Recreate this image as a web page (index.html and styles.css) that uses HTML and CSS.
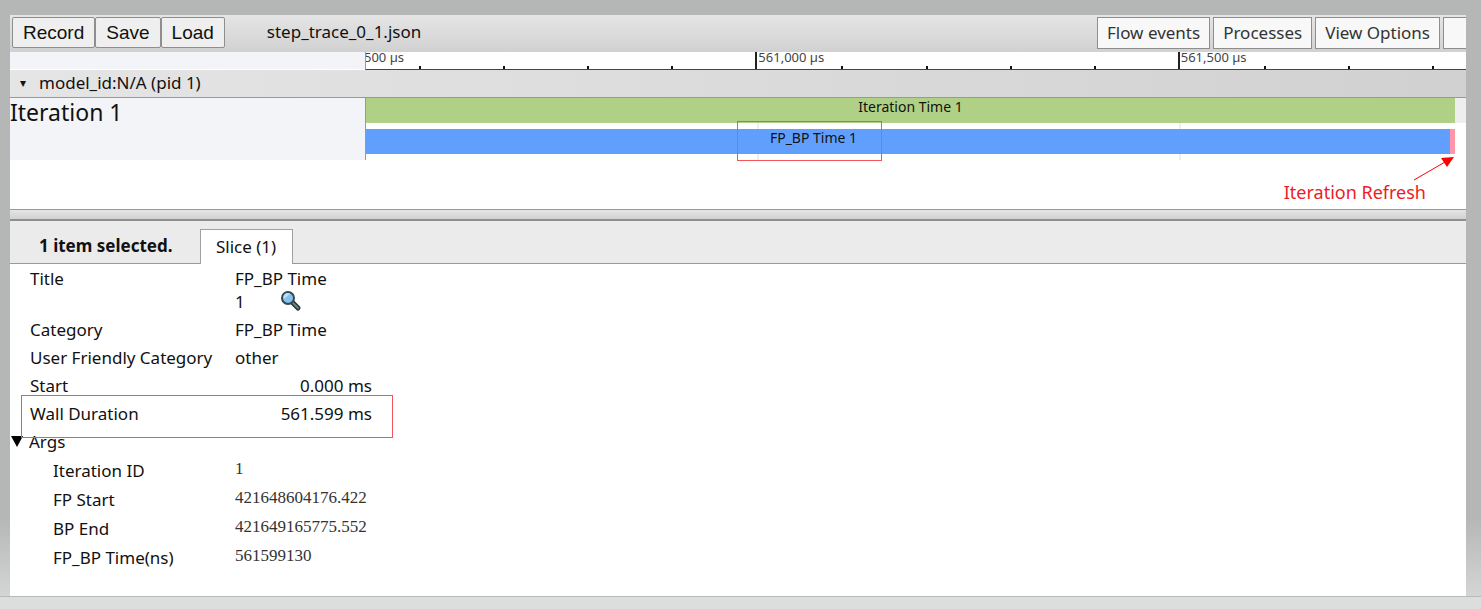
FILE: index.html
```html
<!DOCTYPE html>
<html lang="en">
<head>
<meta charset="utf-8">
<title>step_trace_0_1.json</title>
<link rel="stylesheet" href="styles.css">
</head>
<body>
<main class="viewer">
  <header class="toolbar">
    <div class="actions">
      <button class="action">Record</button>
      <button class="action">Save</button>
      <button class="action">Load</button>
    </div>
    <span class="filename">step_trace_0_1.json</span>
    <div class="menus">
      <button class="menu">Flow events</button>
      <button class="menu">Processes</button>
      <button class="menu">View Options</button>
      <button class="menu menu-cut" aria-label="More"></button>
    </div>
  </header>

  <section class="timeline">
    <div class="ruler">
      <div class="gutter"></div>
      <div class="axis">
        <div class="cell first"><span class="time cut">500 µs</span></div>
        <div class="cell minor"></div><div class="cell minor"></div><div class="cell minor"></div><div class="cell minor"></div>
        <div class="cell major"><span class="time">561,000 µs</span></div>
        <div class="cell minor"></div><div class="cell minor"></div><div class="cell minor"></div><div class="cell minor"></div>
        <div class="cell major"><span class="time">561,500 µs</span></div>
        <div class="cell minor"></div><div class="cell minor"></div><div class="cell minor last"></div>
      </div>
    </div>
    <button class="process"><span class="caret">▾</span>model_id:N/A (pid 1)</button>
    <div class="thread">
      <div class="thread-name">Iteration 1</div>
      <div class="lanes">
        <div class="lane lane-top"><div class="slice green">Iteration Time 1</div></div>
        <div class="lane">
          <div class="slice blue"></div><div class="slice pink"></div>
          <div class="callout">FP_BP Time 1</div>
        </div>
      </div>
    </div>
    <div class="note">
      <svg class="arrow" width="42" height="24" viewBox="0 0 42 24"><path d="M1 23L32 5" stroke="#f00" fill="none"/><path d="M41 0L28 1L34 10Z" fill="#f00"/></svg>
      <span>Iteration Refresh</span>
    </div>
  </section>

  <div class="splitter"></div>

  <section class="analysis">
    <div class="tabs">
      <strong class="summary">1 item selected.</strong>
      <button class="tab">Slice (1)</button>
    </div>
    <table class="props">
      <tbody>
        <tr><th>Title</th><td>FP_BP Time<br>1<a class="find" href="#" aria-label="Find slice"><svg width="22" height="22" viewBox="0 0 22 22"><path d="M12 12L18 18" stroke="#263238" stroke-width="5" stroke-linecap="round"/><path d="M13 13L18 18" stroke="#708087" stroke-width="2" stroke-linecap="round"/><circle cx="8" cy="8" r="6" fill="#83c1ef" stroke="#37474f" stroke-width="2"/><path d="M4 9A4 4 0 0 1 10 4L4 9Z" fill="#b9e0fa"/></svg></a></td></tr>
        <tr><th>Category</th><td>FP_BP Time</td></tr>
        <tr><th>User Friendly Category</th><td>other</td></tr>
        <tr><th>Start</th><td class="num">0.000 ms</td></tr>
        <tr class="marked"><th>Wall Duration</th><td class="num">561.599 ms</td></tr>
      </tbody>
      <tbody class="args">
        <tr><th class="args-head"><button class="toggle"><svg width="12" height="12" viewBox="0 0 12 12"><path d="M0 0H12L6 11Z"/></svg>Args</button></th><td></td></tr>
        <tr><th>Iteration ID</th><td>1</td></tr>
        <tr><th>FP Start</th><td>421648604176.422</td></tr>
        <tr><th>BP End</th><td>421649165775.552</td></tr>
        <tr><th>FP_BP Time(ns)</th><td>561599130</td></tr>
      </tbody>
    </table>
  </section>
</main>
</body>
</html>
```
FILE: styles.css
```css
* { box-sizing: border-box; }

body {
  margin: 0;
  min-height: 100vh;
  display: flex;
  flex-direction: column;
  padding: 15px 15px 0 10px;
  background: linear-gradient(#b4b7b6 0, #b4b7b6 85%, #d4d6d5 98%, #dcdedd 100%);
  font: 17px/23px "Noto Sans", "Open Sans", sans-serif;
  color: #111;
}

body::after {
  content: "";
  height: 12px;
  margin: 0 -15px 0 -10px;
  border-top: 1px solid #b8baba;
  background: #dcdedd;
}

button { font: inherit; color: inherit; margin: 0; }

.viewer {
  flex: 1;
  display: flex;
  flex-direction: column;
  background: #fff;
}

.toolbar {
  display: flex;
  align-items: flex-start;
  height: 37px;
  padding: 2px 0 0 2px;
  overflow: hidden;
  background: linear-gradient(#e5e5e5, #d1d1d1);
}

.actions { display: flex; }

.action {
  height: 31px;
  padding: 0 10px;
  border: 1px solid #8e8e8e;
  border-radius: 2px;
  background: #efefef;
  font: 19px/29px "Liberation Sans", Arial, sans-serif;
}

.filename { padding-left: 42px; line-height: 30px; }

.menus { display: flex; gap: 3px; margin-left: auto; }

.menu {
  height: 32px;
  padding: 0 9px;
  border: 1px solid #8e8e8e;
  background: #f8f8f8;
  color: #333;
  line-height: 28px;
}

.menu-cut { width: 23px; border-right: 0; }

.timeline { position: relative; height: 157px; }

.ruler { display: flex; height: 18px; }

.gutter { width: 355px; background: #f3f4f7; border-bottom: 1px solid #fff; }

.axis {
  flex: 1;
  display: flex;
  overflow: hidden;
  border-left: 1px solid #999;
  border-bottom: 1px solid #444;
}

.cell { flex: 84 1 0; min-width: 0; white-space: nowrap; }
.cell.first { flex-grow: 53; }
.cell.last { flex-grow: 34; }
.cell.major { border-left: 2px solid #222; }
.cell.minor::before {
  content: "";
  display: block;
  width: 2px;
  height: 3px;
  margin-top: 14px;
  background: #111;
}

.time { display: block; margin-left: 1px; font-size: 13px; line-height: 10px; color: #444; }
.time.cut { margin-left: -2px; }

.process {
  display: flex;
  align-items: center;
  width: 100%;
  height: 28px;
  padding: 0 0 2px 10px;
  border: 0;
  border-bottom: 1px solid #999;
  background: linear-gradient(90deg, #e5e5e5, #d1d1d1);
}

.caret { width: 19px; font: 12px/20px "DejaVu Sans", sans-serif; text-align: left; }

.thread { display: flex; height: 62px; }

.thread-name {
  width: 356px;
  border-right: 1px solid #999;
  background: #f3f4f7;
  font-size: 23px;
  line-height: 29px;
}

.lanes {
  flex: 1;
  display: flex;
  flex-direction: column;
  gap: 6px;
  background:
    linear-gradient(#eee, #eee) 35.6% 0 / 2px 100% no-repeat,
    linear-gradient(#eee, #eee) 74% 0 / 2px 100% no-repeat;
}

.lane { position: relative; display: flex; height: 25px; padding-right: 11px; }
.lane-top { background: #eee; }

.slice { height: 25px; font-size: 14px; line-height: 18px; text-align: center; }
.green { flex: 1; background: #b0d185; }
.blue { flex: 1; background: #619fff; }
.pink { width: 5px; background: #ff96a8; }

.callout {
  position: absolute;
  left: 371px;
  top: -8px;
  width: 145px;
  height: 40px;
  padding: 7px 0 0 8px;
  border: 1px solid #f2555a;
  font-size: 14px;
  line-height: 18px;
  text-align: center;
}

.note {
  position: absolute;
  right: 11px;
  top: 105px;
  display: flex;
  flex-direction: column;
  align-items: flex-end;
  color: #ed1c24;
  font-size: 18px;
}

.note span { margin-right: 29px; }

.splitter {
  height: 12px;
  border-top: 1px solid #999;
  border-bottom: 2px solid #8e8e8e;
  background: linear-gradient(#e5e5e5, #d1d1d1);
}

.tabs {
  display: flex;
  align-items: flex-end;
  height: 43px;
  border-bottom: 1px solid #999;
  background: #ebebeb;
}

.summary { width: 190px; padding-left: 29px; line-height: 34px; }

.tab {
  height: 35px;
  margin-bottom: -1px;
  padding: 0 16px 0 15px;
  border: 1px solid #a0a0a0;
  border-bottom: 0;
  background: #fff;
  line-height: 32px;
}

.props { border-collapse: collapse; margin-top: 1px; }
.props th, .props td {
  height: 28px;
  padding: 2px 0 3px;
  font-weight: 400;
  text-align: left;
  vertical-align: top;
}
.props th { width: 225px; padding-left: 20px; }
.props td { width: 137px; }
.props .num { text-align: right; }

.find { display: inline-block; height: 22px; margin-left: 35px; vertical-align: top; }

.marked { position: relative; }
.marked th::after {
  content: "";
  position: absolute;
  inset: -5px -21px -10px 11px;
  border: 1px solid #f2555a;
}

.props .args th, .props .args td { height: 29px; }
.props .args th { padding: 2px 0 4px 43px; }
.props .args td { font: 17px/20px "Liberation Serif", serif; color: #333; }
.props .args .args-head { padding-left: 1px; }

.toggle {
  display: flex;
  align-items: center;
  gap: 6px;
  padding: 0;
  border: 0;
  background: none;
}
```
